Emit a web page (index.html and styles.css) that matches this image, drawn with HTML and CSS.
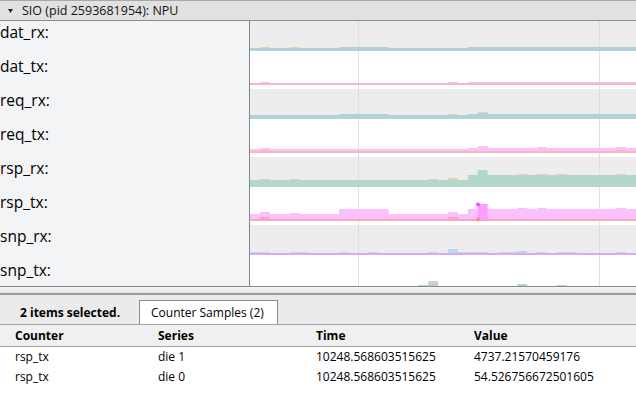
FILE: index.html
```html
<!DOCTYPE html>
<html lang="en">
  <head>
    <meta charset="UTF-8" />
    <title>Counter tracks</title>
    <link rel="stylesheet" href="styles.css">
  </head>
  <body>
    <div id="timeline">
      <div class="process-header">
        <svg class="caret" width="5" height="4" viewBox="0 0 5 4"><polygon points="0,0 5,0 2.5,4" fill="#222"/></svg>
        <span>SIO (pid 2593681954): NPU</span>
      </div>
      <div class="tracks">
        <div class="labels">
          <div class="label">dat_rx:</div>
          <div class="label">dat_tx:</div>
          <div class="label">req_rx:</div>
          <div class="label">req_tx:</div>
          <div class="label">rsp_rx:</div>
          <div class="label">rsp_tx:</div>
          <div class="label">snp_rx:</div>
          <div class="label">snp_tx:</div>
        </div>
        <svg class="chart" width="386" height="265" viewBox="0 0 386 265">
          <!-- row backgrounds -->
          <rect x="0" y="0" width="386" height="30" fill="#ededed"/>
          <rect x="0" y="68" width="386" height="30" fill="#ededed"/>
          <rect x="0" y="136" width="386" height="30" fill="#ededed"/>
          <rect x="0" y="204" width="386" height="30" fill="#ededed"/>
          <!-- time grid -->
          <rect x="108" y="0" width="1" height="265" fill="#dfdfdf"/>
          <rect x="349" y="0" width="1" height="265" fill="#dfdfdf"/>

          <!-- dat_rx -->
          <polygon fill="#b3d1db" points="0,27 89.1,27 89.1,26 138.6,26 138.6,27 217.8,27 217.8,26 386,26 386,30 0,30"/>
          <rect x="9.9" y="26" width="9.9" height="1" fill="#ddd6a9"/>
          <rect x="39.6" y="26" width="9.9" height="1" fill="#ddd6a9"/>

          <!-- dat_tx -->
          <rect x="0" y="62" width="386" height="2" fill="#f4b9c1"/>
          <rect x="9.9" y="61" width="9.9" height="1" fill="#fbbdf3"/>
          <rect x="198" y="61" width="9.9" height="1" fill="#fbbdf3"/>
          <rect x="217.8" y="61" width="168.2" height="1" fill="#fbbdf3"/>

          <!-- req_rx -->
          <polygon fill="#b3d1db" points="0,94 89.1,94 89.1,93 138.6,93 138.6,94 217.8,94 217.8,93 227.7,93 227.7,92 237.6,92 237.6,93 386,93 386,98 0,98"/>
          <rect x="198" y="93" width="9.9" height="1" fill="#ddd6a9"/>
          <rect x="227.7" y="91" width="9.9" height="1" fill="#ddd6a9"/>

          <!-- req_tx -->
          <polygon fill="#fcc0f6" points="0,128 9.9,128 9.9,127 19.8,127 19.8,128 217.8,128 217.8,127 227.7,127 227.7,125 237.6,125 237.6,127 287.1,127 287.1,126 297,126 297,127 366.3,127 366.3,126 376.2,126 376.2,127 386,127 386,130 0,130"/>
          <rect x="0" y="130" width="386" height="2" fill="#f4b9c1"/>
          <rect x="9.9" y="129" width="9.9" height="1" fill="#f4b9c1"/>
          <rect x="366.3" y="129" width="9.9" height="1" fill="#f4b9c1"/>

          <!-- rsp_rx -->
          <polygon fill="#b4d7cc" points="0,159 217.8,159 217.8,154 227.7,154 227.7,149 237.6,149 237.6,154 386,154 386,166 0,166"/>
          <rect x="9.9" y="158" width="9.9" height="1" fill="#ecc9b3"/>
          <rect x="39.6" y="158" width="9.9" height="1" fill="#ecc9b3"/>
          <rect x="178.2" y="158" width="9.9" height="1" fill="#ecc9b3"/>
          <rect x="198" y="157" width="9.9" height="2" fill="#ecc9b3"/>
          <rect x="267.3" y="153" width="9.9" height="1" fill="#ecc9b3"/>
          <rect x="287.1" y="153" width="9.9" height="1" fill="#ecc9b3"/>
          <rect x="306.9" y="153" width="9.9" height="1" fill="#ecc9b3"/>
          <rect x="366.3" y="153" width="9.9" height="1" fill="#ecc9b3"/>

          <!-- rsp_tx -->
          <polygon fill="#fcc0fc" points="0,193 9.9,193 9.9,191 19.8,191 19.8,193 39.6,193 39.6,192 49.5,192 49.5,193 89.1,193 89.1,188 138.6,188 138.6,193 198,193 198,191 207.9,191 207.9,193 217.8,193 217.8,188 267.3,188 267.3,187 277.2,187 277.2,188 287.1,188 287.1,187 297,187 297,188 366.3,188 366.3,187 376.2,187 376.2,188 386,188 386,200 0,200"/>
          <rect x="227.7" y="183" width="9.9" height="17" fill="#ff9cff"/>
          <rect x="0" y="198" width="386" height="2" fill="#f6a9bd"/>
          <rect x="9.9" y="196" width="9.9" height="2" fill="#f6a9bd"/>
          <rect x="198" y="196" width="9.9" height="2" fill="#f6a9bd"/>
          <circle cx="228" cy="183.5" r="2" fill="#ff46ff"/>
          <circle cx="228" cy="198.5" r="2" fill="#ff8a9a"/>

          <!-- snp_rx -->
          <rect x="0" y="232" width="386" height="2" fill="#dcaaf2"/>
          <g fill="#b9d8f3">
            <rect x="1" y="231" width="18.8" height="1"/>
            <rect x="39.6" y="231" width="19.8" height="1"/>
            <rect x="89.1" y="231" width="9.9" height="1"/>
            <rect x="118.8" y="231" width="9.9" height="1"/>
            <rect x="178.2" y="231" width="9.9" height="1"/>
            <rect x="198" y="228" width="9.9" height="4"/>
            <rect x="207.9" y="231" width="29.7" height="1"/>
            <rect x="247.5" y="231" width="19.8" height="1"/>
            <rect x="267.3" y="230" width="9.9" height="2"/>
            <rect x="287.1" y="231" width="9.9" height="1"/>
            <rect x="306.9" y="231" width="19.8" height="1"/>
            <rect x="366.3" y="231" width="9.9" height="1"/>
          </g>

          <!-- snp_tx -->
          <g fill="#b4d7cc">
            <rect x="168.3" y="264" width="9.9" height="4"/>
            <rect x="178.2" y="262" width="9.9" height="6"/>
            <rect x="267.3" y="263" width="9.9" height="5"/>
            <rect x="306.9" y="264" width="9.9" height="4"/>
          </g>
          <rect x="178.2" y="260" width="9.9" height="2" fill="#ecc9b3"/>
        </svg>
      </div>
    </div>
    <div class="splitter"></div>
    <div id="details">
      <div class="tabbar">
        <span class="selected-count">2 items selected.</span>
        <span class="tab">Counter Samples (2)</span>
      </div>
      <div class="samples">
        <div class="row head">
          <span>Counter</span><span>Series</span><span>Time</span><span>Value</span>
        </div>
        <div class="row">
          <span>rsp_tx</span><span>die 1</span><span>10248.568603515625</span><span>4737.21570459176</span>
        </div>
        <div class="row">
          <span>rsp_tx</span><span>die 0</span><span>10248.568603515625</span><span>54.526756672501605</span>
        </div>
      </div>
    </div>
  </body>
</html>
```

FILE: styles.css
```css
* {
  margin: 0;
  padding: 0;
  box-sizing: border-box;
}
body {
  width: 636px;
  height: 393px;
  overflow: hidden;
  background-color: #fff;
  font-family: "Open Sans", "Liberation Sans", sans-serif;
  color: #000;
}
.process-header {
  height: 21px;
  border-top: 1px solid #a9a9a9;
  border-bottom: 1px solid #8c8c8c;
  background-color: #e1e1e1;
  display: flex;
  align-items: center;
  font-size: 12.5px;
  line-height: 19px;
  color: #111;
}
.process-header .caret {
  margin: 1px 9px 0 8px;
}
.tracks {
  display: flex;
  height: 266px;
  border-bottom: 1px solid #8a8a8a;
  overflow: hidden;
}
.labels {
  width: 250px;
  flex-shrink: 0;
  background-color: #f3f4f6;
  border-right: 1px solid #858585;
}
.label {
  height: 34px;
  padding-top: 1px;
  font-size: 15.5px;
  line-height: 20px;
}
.chart {
  display: block;
  flex-shrink: 0;
}
.splitter {
  height: 8px;
  background: linear-gradient(#f6f6f6, #e4e4e4);
  border-bottom: 2px solid #9a9a9a;
}
#details {
  background-color: #fff;
  font-size: 12px;
}
.tabbar {
  display: flex;
  align-items: flex-end;
  height: 30px;
  background-color: #ebebeb;
  border-bottom: 1px solid #a3a3a3;
}
.selected-count {
  width: 139px;
  padding-left: 20px;
  font-weight: bold;
  line-height: 23px;
}
.tab {
  width: 139px;
  height: 24px;
  padding-left: 11px;
  background-color: #fff;
  border: 1px solid #8e8e8e;
  border-bottom: none;
  line-height: 23px;
}
.row {
  display: grid;
  grid-template-columns: 143px 158px 158px 177px;
  height: 20px;
  line-height: 20px;
}
.row span {
  padding-left: 15px;
  white-space: nowrap;
}
.row.head {
  height: 22px;
  padding-top: 1px;
  background-color: #f0f0f0;
  border-bottom: 1px solid #a3a3a3;
  font-weight: bold;
}
```
